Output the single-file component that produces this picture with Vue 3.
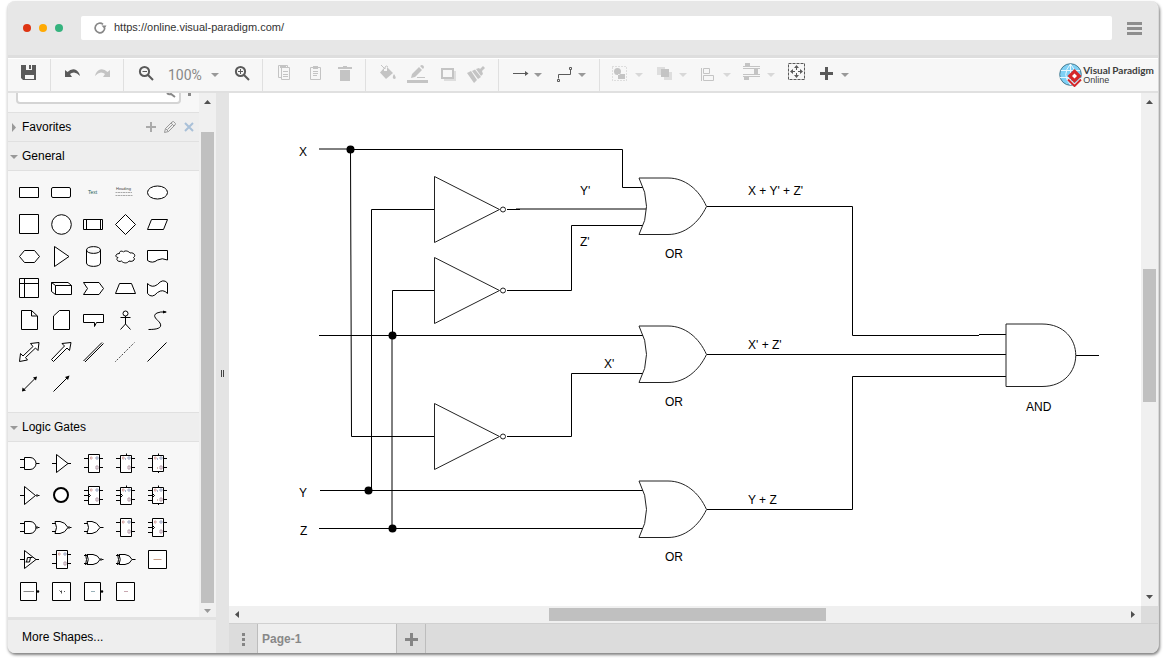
<script setup>
import { ref } from 'vue'

const zoom = ref('100%')

const circle = (cx, cy, r) => `M${cx - r} ${cy}a${r} ${r} 0 1 0 ${2 * r} 0a${r} ${r} 0 1 0 ${-2 * r} 0Z`

const generalShapes = [
  { name: 'Rectangle', d: 'M-9.5-4.5H9.5V5.5H-9.5Z' },
  { name: 'Rounded Rectangle', d: 'M-8-4.5H8Q9.5-4.5 9.5-3V4Q9.5 5.5 8 5.5H-8Q-9.5 5.5-9.5 4V-3Q-9.5-4.5-8-4.5Z' },
  { name: 'Text', texts: [{ t: 'Text', x: -5, y: 2, s: 5, c: '#1f5f58' }] },
  { name: 'Textbox', texts: [{ t: 'Heading', x: -9, y: -2, s: 4, c: '#444' }], lines: 'M-9.5.5H7M-9.5 3.5H7.5' },
  { name: 'Ellipse', d: 'M-9.5.5A10 6.5 0 1 1 10.5.5A10 6.5 0 1 1-9.5.5Z' },
  { name: 'Square', d: 'M-9.5-9.5H9.5V9.5H-9.5Z' },
  { name: 'Circle', d: circle(0.5, 0.5, 9.8) },
  { name: 'Process', d: 'M-9.5-4.5H9.5V5.5H-9.5ZM-6.5-4.5V5.5M7.5-4.5V5.5' },
  { name: 'Diamond', d: 'M.5-9.5L10.5.5L.5 10.5L-9.5.5Z' },
  { name: 'Parallelogram', d: 'M-5.5-4.5H10.5L6.5 5.5H-9.5Z' },
  { name: 'Hexagon', d: 'M-4.5-5.5H5.5L10.5.5L5.5 6.5H-4.5L-9.5.5Z' },
  { name: 'Triangle', d: 'M-6.5-9.5L8 .5L-6.5 10.5Z' },
  { name: 'Cylinder', d: 'M-6.5-6C-6.5-10.5 7.5-10.5 7.5-6V7C7.5 11.5-6.5 11.5-6.5 7ZM-6.5-6C-6.5-1.5 7.5-1.5 7.5-6' },
  { name: 'Cloud', d: 'M-5.5-2.5C-9.5-2.5-10.5 1-7 1.5C-10 4-6 6.5-3.5 5C-1.5 7.5 2.5 7.5 4 5C8 6.5 11 3 8.5 1.5C11.5-.5 8.5-4 5-3C3-5.5-.5-5.5-1.5-4C-4-6-6-4-5.5-2.5Z' },
  { name: 'Document', d: 'M-9.5-5.5H10.5V4Q5 1.5.5 4Q-4.5 8-9.5 4.5Z' },
  { name: 'Internal Storage', d: 'M-9.5-9.5H9.5V9.5H-9.5ZM-4.5-9.5V9.5M-9.5-4.5H9.5' },
  { name: 'Cube', d: 'M-9.5-5.5H7L10.5-2.5V6.5H-5.5L-9.5 3.5ZM-9.5-5.5L-5.5-2.5H10.5M-5.5-2.5V6.5' },
  { name: 'Step', d: 'M-9.5-5.5H6L10.5.5L6 6.5H-9.5L-5.5.5Z' },
  { name: 'Trapezoid', d: 'M-5.5-4.5H6.5L10.5 5.5H-9.5Z' },
  { name: 'Tape', d: 'M-9.5-4.5Q-5 .5.5-3.5Q6-10 10.5-5V5.5Q6 .5.5 4.5Q-5 11-9.5 5.5Z' },
  { name: 'Note', d: 'M-7.5-9.5H2.5L8.5-4V9.5H-7.5ZM2.5-9.5V-4H8.5' },
  { name: 'Card', d: 'M-1.5-9.5H8.5V9.5H-7.5V-4Z' },
  { name: 'Callout', d: 'M-9.5-5.5H10.5V2.5H3.5L1.5 6.5V2.5H-9.5Z' },
  { name: 'Actor', d: circle(0.5, -6.5, 2.5) + 'M.5-4V4M-4.5-2.5H5.5M-4.5 9.5L.5 4L5.5 9.5' },
  { name: 'Curve', d: 'M-8.5 9.5C-1 9.5 6 8.5 3 3C1 0-6-4 0-7Q3-8.5 9-8', open: true, solid: 'M6-9.5L10-8L6-6.5Z' },
  { name: 'Bidirectional Arrow', d: 'M10-9.5L9-1.5L6.5-4L-3.5 5.5L-1.5 8L-9.5 9.5L-8.5 1.5L-6 4L4-5.5L1.5-8.5Z' },
  { name: 'Arrow', d: 'M10-9.5L8.5-1.5L6-4L-7.5 9.5L-9.5 7.5L3.5-6L1-8.5Z' },
  { name: 'Link', d: 'M-9.5 9L9-9.5M-8 10L10.5-8.5', open: true },
  { name: 'Dashed Line', d: 'M-9.5 9.5L9.5-9.5', open: true, dash: '1 1.4' },
  { name: 'Line', d: 'M-9.5 9.5L9.5-9.5', open: true },
  { name: 'Bidirectional Connector', d: 'M-6 6.5L7-6.5', open: true, solid: 'M8-7.5L7-3.5L4-6.5ZM-7 7.5L-6.5 3.5L-3 6.5Z' },
  { name: 'Directional Connector', d: 'M-7.5 7.5L7-7', open: true, solid: 'M8.5-8.5L7-4L4-7Z' }
]

const andBody = 'M-4.5-5.5H1A6 6 0 0 1 1 6.5H-4.5ZM-9-3.5H-4.5M-9 4.5H-4.5'
const orBody = 'M-6-5.5H-1Q4-5 7 .5Q4 6-1 6.5H-6Q-3 .5-6-5.5ZM-9-3.5H-5M-9 4.5H-5'
const xorBody = 'M-6-4.5H0Q5-4 7 .5Q5 5 0 5.5H-6Q-3.5.5-6-4.5ZM-9-3.5H-5M-9 4.5H-5M-7.5-5Q-5.5.5-7.5 6'
const output = 'M7 .5H10.5'
const invertedOutput = circle(8, 0.5, 0.8) + 'M9 .5H10.5'

function chip(inputs, top, bottom) {
  const y0 = top ? -7.5 : -8.5
  const y1 = bottom ? 8.5 : 9.5
  let d = `M-4.5 ${y0}H6.5V${y1}H-4.5ZM6.5-4.5H10M6.5 4.5H10`
  const rows = inputs === 3 ? [-4.5, 0.5, 5.5] : [-4.5, 4.5]
  rows.forEach((y) => { d += `M-9 ${y}H-4.5` })
  if (inputs === 3) d += 'M-4.5-1.5L-2.5.5L-4.5 2.5'
  if (top) d += 'M1.5-9.5V-7.5'
  if (bottom) d += 'M1.5 8.5V10'
  return { d, pins: true, topPin: top, bottomPin: bottom }
}

const logicShapes = [
  { name: 'AND', d: andBody + output },
  { name: 'Buffer', d: 'M-4.5-8.5L7 .5L-4.5 9.5ZM-9 .5H-4.5M7 .5H10' },
  { name: 'D Flip-Flop', ...chip(2) },
  { name: 'D Flip-Flop with Set', ...chip(2, true) },
  { name: 'D Flip-Flop with Set and Reset', ...chip(2, true, true) },
  { name: 'Inverter', d: 'M-4.5-8.5L6.5.5L-4.5 9.5ZM-9 .5H-4.5' + invertedOutput },
  { name: 'Connector', d: circle(0, 0, 7), weight: 2 },
  { name: 'JK Flip-Flop', ...chip(3) },
  { name: 'JK Flip-Flop with Set', ...chip(3, true) },
  { name: 'JK Flip-Flop with Set and Reset', ...chip(3, true, true) },
  { name: 'NAND', d: andBody + invertedOutput },
  { name: 'NOR', d: orBody + invertedOutput },
  { name: 'OR', d: orBody + output },
  { name: 'RS Latch', ...chip(2) },
  { name: 'RS Flip-Flop', ...chip(3) },
  { name: 'Schmitt Trigger', d: 'M-4.5-8.5L7 .5L-4.5 9.5ZM-9 .5H-4.5M7 .5H10M-3.5 3H.5L1.5-1.5H-1.5L-2.5 3M1-1.5H3.5' },
  { name: 'T Flip-Flop', ...chip(2) },
  { name: 'XNOR', d: xorBody + invertedOutput },
  { name: 'XOR', d: xorBody + output },
  { name: 'Logic', d: 'M-8.5-8.5H9.5V9.5H-8.5Z', mark: 'M-3.5.5H4.5', tint: '#c8a088' },
  { name: 'Inverting Block', d: 'M-8.5-8.5H7.5V9.5H-8.5Z', solid: circle(9, 0.5, 1.3), mark: 'M-5.5.5H5', tint: '#888' },
  { name: 'Output Block', d: 'M-8.5-8.5H9.5V9.5H-8.5Z', mark: 'M-1.5-.5L.5 1.5M.5-.5V2.5M3 .5H4', tint: '#555' },
  { name: 'Active Block', d: 'M-8.5-8.5H7.5V9.5H-8.5Z', solid: circle(9, 0.5, 1.3), mark: 'M-2 .5H2', tint: '#99b0b8' },
  { name: 'Block', d: 'M-8.5-8.5H9.5V9.5H-8.5Z', mark: 'M-1 .5H3', tint: '#c8a8b0' }
]

const sections = [
  { title: 'General', id: 'general', shapes: generalShapes },
  { title: 'Logic Gates', id: 'logic', shapes: logicShapes }
]

const tools = [
  [
    {
      name: 'Save', tone: 'dark',
      fill: 'M7 6H22V21H9L7 19ZM12 6V11H18V6ZM11 16V20H20V16Z', extra: 'M15 6H17V10H15Z'
    }
  ],
  [
    { name: 'Undo', tone: 'dark', fill: 'M8 11L10.5 13Q14 9.5 18 10.5Q22 12 23 17Q20 13.5 17 13.5Q14.5 13.5 13 15L15 18H8Z' },
    { name: 'Redo', tone: 'light', fill: 'M23 11L20.5 13Q17 9.5 13 10.5Q9 12 8 17Q11 13.5 14 13.5Q16.5 13.5 18 15L16 18H23Z' }
  ],
  [
    { name: 'Zoom Out', tone: 'dark', stroke: circle(14.5, 12.5, 4.6) + 'M18 16L23 21', weight: 2, thin: 'M12.5 12.5H17' },
    { name: 'Zoom', select: true },
    { name: 'Zoom In', tone: 'dark', stroke: circle(14.5, 12.5, 4.6) + 'M18 16L23 21', weight: 2, thin: 'M12 12.5H17M14.5 10V15' }
  ],
  [
    { name: 'Copy', tone: 'light', thin: 'M12 18.5H9.5V6.5H18.5V8M12.5 8.5H20.5V20.5H12.5ZM14 12.5H19M14 15.5H19M14 17.5H19', fill: 'M11 6H17V9H11Z' },
    { name: 'Paste', tone: 'light', thin: 'M11.5 8.5H21.5V20.5H11.5ZM14 12.5H19M14 14.5H19M14 16.5H18', fill: 'M14 7H19V10H14Z' },
    { name: 'Delete', tone: 'light', fill: 'M9 8H14V7H18V8H23V10H9ZM11 11H21V22H11Z' }
  ],
  [
    { name: 'Fill Color', tone: 'light', fill: 'M8 13.5L12 9V12H15V8L21 14L14 20ZM22 15Q25.5 20 22 20Q19.5 19 22 15Z', thin: 'M9 6L13 10V8Q14.5 6 16 8' },
    { name: 'Line Color', tone: 'light', fill: 'M5 21H26V24H5ZM9 19L10 15L17 8L20 11L13 18ZM18 7L19.5 6Q22 6 22 8.5L21 10Z', thin: 'M15 18.5H23' },
    { name: 'Shadow', tone: 'light', pale: 'M12 12H24V22H12Z', paper: 'M10 10H21V19H10Z', stroke: 'M10 10H21V19H10Z', weight: 2 },
    { name: 'Format Painter', tone: 'light', fill: 'M5 14L9 12L15 21L12 24ZM10 12L13 10.5L19 18L16 20ZM14 10L17 9L18 10L21 7L23 9L20 12L21 15L19 17Z' }
  ],
  [
    { name: 'Connector', tone: 'dark', menu: true, thin: 'M8 14.5H21', fill: 'M20 12L23.5 14.5L20 17Z' },
    { name: 'Waypoints', tone: 'dark', menu: true, thin: 'M9.5 19.5V15.5H21.5V10.5M8.5 20.5H10.5V22.5H8.5ZM20.5 8.5H22.5V10.5H20.5Z' }
  ],
  [
    { name: 'Group', tone: 'light', menu: true, paleCaret: true, fill: circle(11.5, 12.5, 3.5) + 'M12 15H19V20H12Z', dotted: 'M6.5 7.5H20.5V21.5H6.5Z' },
    { name: 'To Front', tone: 'light', menu: true, paleCaret: true, pale: 'M7 8H15V16H7ZM14 13H22V21H14Z', fill: 'M11 10H19V18H11Z' },
    { name: 'Align', tone: 'light', menu: true, paleCaret: true, thin: 'M7.5 9V22M9.5 9.5H15.5V14.5H9.5ZM9.5 16.5H19.5V21.5H9.5Z' },
    { name: 'Distribute', tone: 'light', menu: true, paleCaret: true, fill: 'M7 4H12V7H7ZM16 10H20V15H16ZM6 18H11V21H6Z', thin: 'M5 7.5H22M5 9.5H22M5 15.5H22M5 17.5H22' },
    { name: 'Fit Page', tone: 'dark', dashed: 'M6.5 4.5H22.5V20.5H6.5Z', fill: 'M14.5 6L17 9H12ZM14.5 19L17 16H12ZM8 12.5L11 10V15ZM21 12.5L18 10V15Z', thin: 'M14.5 9V11M14.5 14V16M11 12.5H13M16 12.5H18' },
    { name: 'Insert', tone: 'dark', menu: true, fill: 'M13 8H16V13H21V16H16V21H13V16H8V13H13Z' }
  ]
]

const wires = [
  'M319 149H350', 'M350 149.5H622.5V187.5H643', 'M350.5 149.5L351.5 436.5H434',
  'M371.5 490V209.5H434', 'M392.5 335V290.5H434', 'M392 335V528',
  'M507 209.5H520', 'M516 209H647', 'M507 290.5H571.5V225.5H643',
  'M319 335.5H643', 'M507 436.5H571.5V373.5H643',
  'M320 490.5H643', 'M319 528.5H643',
  'M707 206.5H852.5V335.5H979', 'M979 334.5H1006',
  'M707 354.5H1006', 'M707 509.5H852.5V376.5H1006', 'M1076 355.5H1099'
]
const inverters = [209.5, 290.5, 436.5]
const orGates = [206.5, 354.5, 509.5]
const joints = [[350.5, 149.5], [392.5, 335.5], [368.5, 490.5], [392.5, 528.5]]
const labels = [
  ['X', 299, 156], ['Y', 299, 497], ['Z', 300, 535],
  ["Y'", 580, 195], ["Z'", 580, 246], ["X'", 604, 368],
  ["X + Y' + Z'", 748, 195], ["X' + Z'", 748, 349], ['Y + Z', 748, 504],
  ['OR', 665, 258], ['OR', 665, 406], ['OR', 665, 561], ['AND', 1026, 411]
]
</script>

<template>
  <div class="window">
    <header class="chrome">
      <div class="lights"><i class="red"></i><i class="amber"></i><i class="green"></i></div>
      <div class="address">
        <svg width="14" height="14" viewBox="0 0 14 14" aria-hidden="true">
          <path d="M11.7 7A4.8 4.8 0 1 1 10 3.3" fill="none" stroke="#888" stroke-width="1.7" />
          <path d="M8.5 4.5H13.5L11.5 8Z" fill="#888" />
        </svg>
        <input type="text" aria-label="Address" value="https://online.visual-paradigm.com/" />
      </div>
      <button class="burger" aria-label="Menu"><i></i><i></i><i></i></button>
    </header>

    <nav class="toolbar">
      <div v-for="(group, g) in tools" :key="g" class="group">
        <template v-for="tool in group" :key="tool.name">
          <div v-if="tool.select" class="zoom">
            <select v-model="zoom" aria-label="Zoom level">
              <option>50%</option>
              <option>100%</option>
              <option>200%</option>
            </select>
            <svg class="zoom-caret" width="8" height="4" viewBox="0 0 8 4" aria-hidden="true"><path d="M0 0H8L4 4Z" fill="#999" /></svg>
          </div>
          <button v-else class="tool" :class="[tool.tone, { menu: tool.menu }]" :aria-label="tool.name">
            <svg width="30" height="33" viewBox="0 0 30 33" aria-hidden="true">
              <path v-if="tool.pale" class="pale" :d="tool.pale" />
              <path v-if="tool.paper" class="paper" :d="tool.paper" />
              <path v-if="tool.fill" class="solid" fill-rule="evenodd" :d="tool.fill" />
              <path v-if="tool.extra" class="solid" :d="tool.extra" />
              <path v-if="tool.stroke" class="line" :d="tool.stroke" :stroke-width="tool.weight" />
              <path v-if="tool.thin" class="line" :d="tool.thin" />
              <path v-if="tool.dotted" class="line" :d="tool.dotted" stroke-dasharray="1 2" />
              <path v-if="tool.dashed" class="line" :d="tool.dashed" stroke-dasharray="3 1" />
            </svg>
            <svg v-if="tool.menu" width="8" height="4" viewBox="0 0 8 4" aria-hidden="true">
              <path d="M0 0H8L4 4Z" :fill="tool.paleCaret ? '#d8d8d8' : '#999'" />
            </svg>
          </button>
        </template>
      </div>
      <a class="brand" href="#">
        <svg width="24" height="24" viewBox="0 0 24 24" aria-hidden="true">
          <circle cx="11.5" cy="11.5" r="10.8" fill="#7fd0f5" stroke="#4a7c90" />
          <path d="M11.5 1V22M2 7.5H21M1 14.5H20M11.5 1Q2 11.5 11.5 22M11.5 1Q21 11.5 11.5 22" fill="none" stroke="#e8f8ff" />
          <path d="M15.5 6L22.5 13L15.5 20L8.5 13Z" fill="#d5282b" />
          <path d="M15.5 10.5L18 13L15.5 15.5L13 13Z" fill="#fff" />
          <path d="M8.5 15.5L15.5 22L22.5 15.5" fill="none" stroke="#fff" stroke-width="2" />
          <path d="M9 16.5L15.5 23L22 16.5" fill="none" stroke="#d5282b" stroke-width="2" />
        </svg>
        <span class="brand-text"><b><span>Visual</span><span>Paradigm</span></b><span>Online</span></span>
      </a>
    </nav>

    <div class="workspace">
      <aside class="side">
        <div class="side-scroll">
          <div class="shapes">
            <div class="search">
              <input type="text" aria-label="Search shapes" />
              <svg width="10" height="5" viewBox="0 0 10 5" aria-hidden="true"><path d="M1 0Q3 2 5 1L9 4" fill="none" stroke="#888" stroke-width="2" /></svg>
              <i></i>
            </div>
            <div class="section">
              <svg width="10" height="9" viewBox="0 0 10 9" aria-hidden="true"><path d="M3 0L7 4.5L3 9Z" fill="#999" /></svg>
              <span>Favorites</span>
              <div class="actions">
                <button aria-label="Add">
                  <svg width="12" height="12" viewBox="0 0 12 12"><path d="M6 1V11M1 6H11" stroke="#aaa" stroke-width="2" /></svg>
                </button>
                <button aria-label="Edit">
                  <svg width="12" height="12" viewBox="0 0 12 12"><path d="M.5 11.5L1.5 7.5L8 1L9.5.5L11.5 2.5L11 4L4.5 10.5ZM1.5 7.5L4.5 10.5M7 2L10 5M3.5 8.5L8.5 3.5" fill="none" stroke="#999" /></svg>
                </button>
                <button aria-label="Remove">
                  <svg width="12" height="12" viewBox="0 0 12 12"><path d="M2 2L10 10M10 2L2 10" stroke="#a9c0d8" stroke-width="2" /></svg>
                </button>
              </div>
            </div>
            <template v-for="section in sections" :key="section.id">
              <div class="section">
                <svg width="10" height="9" viewBox="0 0 10 9" aria-hidden="true"><path d="M1 3H9L5 7Z" fill="#999" /></svg>
                <span>{{ section.title }}</span>
              </div>
              <div class="palette" :class="section.id">
                <button v-for="shape in section.shapes" :key="shape.name" :aria-label="shape.name">
                  <svg width="32" height="32" viewBox="-16 -16 32 32" aria-hidden="true">
                    <path
                      v-if="shape.d" :d="shape.d" :fill="shape.open ? 'none' : '#fff'" stroke="#000"
                      :stroke-width="shape.weight || 1" :stroke-dasharray="shape.dash"
                    />
                    <path v-if="shape.solid" :d="shape.solid" fill="#000" />
                    <path v-if="shape.lines" :d="shape.lines" stroke="#aaa" stroke-dasharray="2 .5" />
                    <path v-if="shape.mark" :d="shape.mark" fill="none" :stroke="shape.tint" />
                    <g v-if="shape.pins" fill="none">
                      <path d="M-2.5-6H-1V-4H-2.5Z" stroke="#d8aaa8" />
                      <path d="M3-6H5V-4H3Z" stroke="#9aa4c0" />
                      <path d="M3 3H5V6H3Z" stroke="#b49aa8" />
                      <path v-if="shape.topPin" d="M.5-5V-3" stroke="#aab8d0" />
                      <path v-if="shape.bottomPin" d="M.5 4V6" stroke="#d0b8aa" />
                    </g>
                    <text v-for="t in shape.texts" :key="t.t" :x="t.x" :y="t.y" :font-size="t.s" :fill="t.c">{{ t.t }}</text>
                  </svg>
                </button>
              </div>
            </template>
          </div>
          <div class="vbar side-bar">
            <svg width="17" height="17" viewBox="0 0 17 17" aria-hidden="true"><path d="M5 11H12L8.5 7Z" fill="#505050" /></svg>
            <div class="track"><i class="before"></i><i class="thumb"></i></div>
            <svg width="17" height="14" viewBox="0 0 17 14" aria-hidden="true"><path d="M5 6H12L8.5 10Z" fill="#999" /></svg>
          </div>
        </div>
        <button class="more">More Shapes...</button>
      </aside>

      <div class="splitter"><i></i><i></i></div>

      <main class="editor">
        <div class="board">
          <div class="canvas">
            <svg class="diagram" width="912" height="513" viewBox="229 93 912 513" role="img" aria-label="Logic diagram">
              <g fill="none" stroke="#000">
                <path v-for="wire in wires" :key="wire" :d="wire" />
              </g>
              <g fill="#fff" stroke="#222">
                <g v-for="y in inverters" :key="y">
                  <path :d="`M434.5 ${y - 33}L499.5 ${y}L434.5 ${y + 33}Z`" />
                  <circle cx="503" :cy="y" r="2.5" />
                </g>
                <path
                  v-for="y in orGates" :key="y"
                  :d="`M639 ${y - 28.5}H668C685 ${y - 28.5} 699 ${y - 17} 706.5 ${y}C699 ${y + 16} 685 ${y + 28} 668 ${y + 28}H639Q654 ${y} 639 ${y - 28.5}Z`"
                />
                <path d="M1006 324H1042C1087 324 1087 386.5 1042 386.5H1006Z" />
              </g>
              <circle v-for="j in joints" :key="j.join()" :cx="j[0]" :cy="j[1]" r="4" />
              <text v-for="(l, i) in labels" :key="i" :x="l[1]" :y="l[2]">{{ l[0] }}</text>
            </svg>
          </div>
          <div class="vbar main-bar">
            <svg width="17" height="17" viewBox="0 0 17 17" aria-hidden="true"><path d="M5 11H12L8.5 7Z" fill="#505050" /></svg>
            <div class="track"><i class="before"></i><i class="thumb"></i><i class="after"></i></div>
            <svg width="17" height="17" viewBox="0 0 17 17" aria-hidden="true"><path d="M5 6H12L8.5 10Z" fill="#505050" /></svg>
          </div>
          <div class="hbar">
            <svg width="17" height="17" viewBox="0 0 17 17" aria-hidden="true"><path d="M10 5V12L6 8.5Z" fill="#505050" /></svg>
            <div class="track"><i class="before"></i><i class="thumb"></i><i class="after"></i></div>
            <svg width="17" height="17" viewBox="0 0 17 17" aria-hidden="true"><path d="M7 5V12L11 8.5Z" fill="#505050" /></svg>
          </div>
          <div class="corner"></div>
        </div>
        <footer class="tabs">
          <button class="tab-tool" aria-label="Pages">
            <svg width="14" height="14" viewBox="0 0 14 14"><path d="M6 1H9V4H6ZM6 6H9V9H6ZM6 11H9V14H6Z" fill="#858585" /></svg>
          </button>
          <button class="tab">Page-1</button>
          <button class="tab-tool add" aria-label="Add page">
            <svg width="14" height="14" viewBox="0 0 14 14"><path d="M6 1H9V6H14V9H9V14H6V9H1V6H6Z" fill="#858585" /></svg>
          </button>
        </footer>
      </main>
    </div>
  </div>
</template>

<style>
html, body, #app { height: 100%; }
body { margin: 0; background: #fff; }
#app { box-sizing: border-box; padding: 1px 11px 12px 7px; }
</style>

<style scoped>
* { box-sizing: border-box; }
button, input, select { font: inherit; color: inherit; margin: 0; padding: 0; border: 0; background: none; border-radius: 0; }
svg { display: block; flex: none; }

.window {
  display: flex;
  flex-direction: column;
  height: 100%;
  border-left: 1px solid #e4e4e4;
  border-right: 1px solid #d8d8d8;
  border-radius: 8px;
  overflow: hidden;
  background: #f7f7f7;
  box-shadow: 1px 2px 3px rgba(0, 0, 0, .5);
  font: 12px/16px "Liberation Sans", Arial, sans-serif;
  color: #000;
}

.chrome {
  display: flex;
  align-items: center;
  flex: none;
  height: 57px;
  padding: 0 16px 0 15px;
  background: #e7e7e7;
  border-bottom: 3px solid #dedede;
}
.lights { display: flex; gap: 8px; }
.lights i { width: 8px; height: 8px; border-radius: 50%; }
.red { background: #de3412; }
.amber { background: #ffaa04; }
.green { background: #35b37e; }
.address {
  display: flex;
  align-items: center;
  flex: 1;
  gap: 7px;
  height: 24px;
  margin: 0 15px 0 18px;
  padding: 0 12px;
  background: #fff;
  border-radius: 2px;
}
.address input { flex: 1; outline: 0; height: 16px; padding-bottom: 2px; font-size: 11px; line-height: 14px; color: #333; }
.burger { display: flex; flex-direction: column; gap: 2px; width: 15px; }
.burger i { height: 3px; background: #8e8e8e; }

.toolbar {
  display: flex;
  flex: none;
  height: 35px;
  background: #f7f7f7;
  border-top: 1px solid #fff;
  border-bottom: 2px solid #e0e0e0;
}
.group { display: flex; padding: 0 6px; border-right: 1px solid #e0e0e0; }
.group:last-of-type { border-right: 0; }
.tool { display: flex; align-items: center; width: 30px; }
.tool.menu { width: 44px; }
.tool svg + svg { margin-left: -1px; }
.line { fill: none; }
.dark .solid { fill: #5a5a5a; }
.dark .line { stroke: #5a5a5a; }
.light .solid { fill: #c4c4c4; }
.light .line { stroke: #c4c4c4; }
.pale { fill: #dedede; }
.paper { fill: #f7f7f7; }
.zoom { display: flex; align-items: center; position: relative; width: 66px; }
.zoom select { appearance: none; width: 100%; padding-left: 8px; outline: 0; font: 14px/18px Roboto, sans-serif; color: #888; }
.zoom-caret { position: absolute; right: 7px; pointer-events: none; }
.brand { display: flex; align-items: center; margin-left: auto; padding-right: 4px; color: #3c3c3c; text-decoration: none; }
.brand-text { display: flex; flex-direction: column; font: 9px/10px "Liberation Sans", Arial, sans-serif; }
.brand-text b { display: flex; gap: 2px; font: bold 10px/10px Lato, sans-serif; }

.workspace { display: flex; flex: 1; min-height: 0; }
.side { display: flex; flex-direction: column; width: 208px; flex: none; }
.side-scroll { display: flex; flex: 1; min-height: 0; }
.shapes { flex: 1; min-width: 0; overflow: hidden; }
.search { display: flex; height: 19px; padding-left: 8px; }
.search input { width: 165px; height: 24px; margin-top: -13px; border: 2px solid #d4d4d4; border-radius: 4px; background: #fff; }
.search svg { margin-left: -15px; }
.search i { width: 3px; height: 3px; margin-left: 12px; background: #888; }
.section {
  display: flex;
  align-items: center;
  height: 29px;
  padding: 0 4px 0 1px;
  background: #eee;
  border-top: 1px solid #e0e0e0;
}
.section span { margin-left: 3px; }
.actions { display: flex; gap: 7px; margin-left: auto; }
.palette {
  display: grid;
  grid-template-columns: repeat(5, 32px);
  grid-auto-rows: 32px;
  padding: 5px;
  border-top: 1px solid #e0e0e0;
}
.general { padding-bottom: 12px; }
.more { flex: none; height: 36px; padding-left: 14px; text-align: left; background: #eee; border-top: 3px solid #e2e2e2; }

.vbar { display: flex; flex-direction: column; width: 17px; flex: none; background: #f0f0f0; }
.hbar { display: flex; height: 17px; background: #f0f0f0; }
.track { display: flex; flex: 1; }
.vbar .track { flex-direction: column; margin: 0 2px; }
.hbar .track { margin: 2px 0; }
.thumb { background: #c0c0c0; }
.side-bar .before { flex: 22; }
.side-bar .thumb { flex: 471; }
.main-bar .before { flex: 159; }
.main-bar .thumb { flex: 133; }
.main-bar .after { flex: 187; }
.hbar .before { flex: 303; }
.hbar .thumb { flex: 277; }
.hbar .after { flex: 298; }

.splitter { display: flex; align-items: center; justify-content: center; gap: 1px; width: 13px; flex: none; background: #e4e4e4; }
.splitter i { width: 1px; height: 7px; background: #444; }

.editor { display: flex; flex-direction: column; flex: 1; min-width: 0; }
.board { display: grid; grid-template: minmax(0, 1fr) 17px / minmax(0, 1fr) 17px; flex: 1; min-height: 0; }
.canvas { overflow: hidden; background: #fff; }
.diagram text { font-size: 12px; }
.corner { background: #dcdcdc; }
.tabs { display: flex; flex: none; height: 30px; background: #dcdcdc; border-top: 1px solid #d0d0d0; }
.tab-tool { display: flex; align-items: center; justify-content: center; width: 29px; border-right: 1px solid #bdbdbd; }
.tab { width: 138px; padding-left: 4px; text-align: left; font-weight: bold; color: #888; background: #eee; }
.add { width: 30px; border-left: 1px solid #bdbdbd; }
</style>
